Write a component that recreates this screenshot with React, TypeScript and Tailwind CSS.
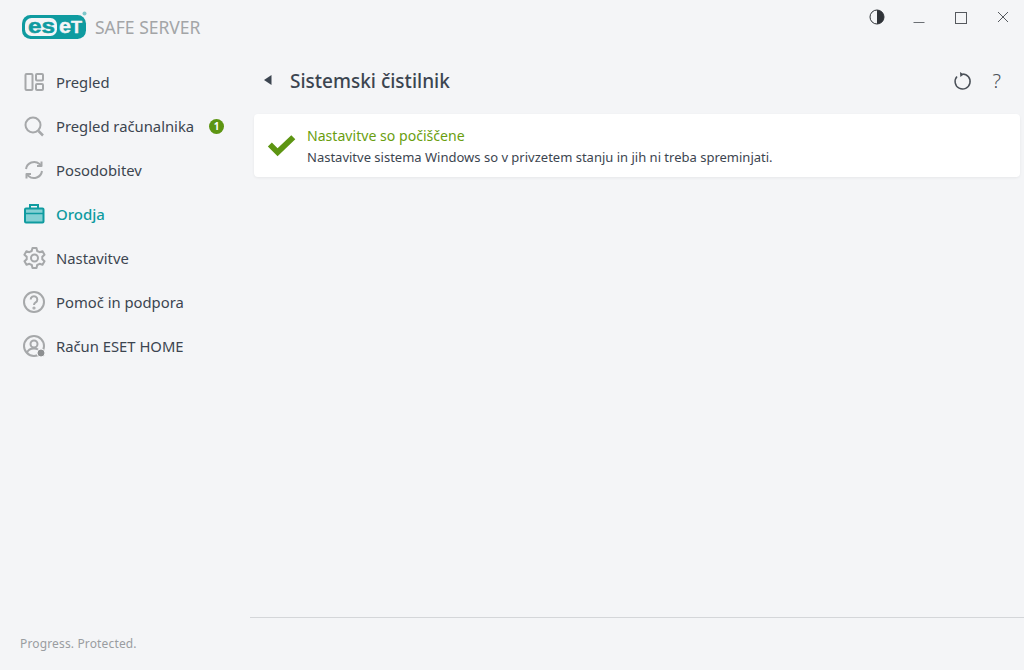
import { ReactNode } from "react";

const grey = "#a6a8aa";

function EsetLogo() {
    return (
        <svg width="66" height="30" viewBox="0 0 66 30" className="block">
            <rect x="0" y="5" width="64" height="24" rx="8.500" fill="#0f9ba0" />
            <rect x="3" y="8" width="32" height="18" rx="6.500" fill="#f4f5f7" />
            <text x="6" y="23" fontFamily="'Liberation Sans', sans-serif" fontWeight="700" fontSize="20" fill="#0f9ba0" stroke="#0f9ba0" strokeWidth="0.500" textLength="27" lengthAdjust="spacingAndGlyphs">es</text>
            <text x="37" y="23" fontFamily="'Liberation Sans', sans-serif" fontWeight="700" fontSize="20" fill="#f4f5f7" stroke="#f4f5f7" strokeWidth="0.400" textLength="12" lengthAdjust="spacingAndGlyphs">e</text>
            <text x="49" y="23" fontFamily="'Liberation Sans', sans-serif" fontWeight="700" fontSize="16" fill="#f4f5f7" stroke="#f4f5f7" strokeWidth="0.400" textLength="11" lengthAdjust="spacingAndGlyphs">T</text>
            <circle cx="62.500" cy="3.500" r="2" fill="#7fc8cb" />
        </svg>
    );
}

function NavIcon({ children }: { children: ReactNode }) {
    return (
        <svg width="24" height="24" viewBox="0 0 24 24" fill="none" stroke={grey} strokeWidth="2" strokeLinejoin="round" className="shrink-0">
            {children}
        </svg>
    );
}

const items: { label: string; icon: ReactNode; active?: boolean; badge?: string }[] = [
    {
        label: "Pregled",
        icon: (
            <NavIcon>
                <rect x="3.500" y="4" width="7" height="16" rx="1" />
                <rect x="14" y="4" width="7" height="6.500" rx="1" />
                <rect x="14" y="14" width="7" height="6" rx="1" />
            </NavIcon>
        ),
    },
    {
        label: "Pregled računalnika",
        badge: "1",
        icon: (
            <NavIcon>
                <circle cx="11" cy="11" r="7.500" />
                <path d="M16.500 17l4.500 4.500" strokeWidth="2.500" />
            </NavIcon>
        ),
    },
    {
        label: "Posodobitev",
        icon: (
            <NavIcon>
                <path d="M4 11a8.200 8.200 0 0 1 13.500-5l2 1.800" />
                <path d="M20 13a8.200 8.200 0 0 1-13.500 5l-2-1.800" />
                <path d="M19.500 3.500v4.500h-4.500" />
                <path d="M4.500 20.500v-4.500h4.500" />
            </NavIcon>
        ),
    },
    {
        label: "Orodja",
        active: true,
        icon: (
            <svg width="24" height="24" viewBox="0 0 24 24" fill="none" stroke="#0f9ba0" strokeWidth="2" className="shrink-0">
                <rect x="3" y="6.500" width="18.500" height="14" rx="1" fill="#84d0d3" />
                <path d="M8 6.500V3h8v3.500" />
                <path d="M3 11.500h18.500" strokeWidth="1.500" />
            </svg>
        ),
    },
    {
        label: "Nastavitve",
        icon: (
            <NavIcon>
                <circle cx="12.500" cy="12" r="3.500" />
                <path d="M10.500 2h4l.7 3 2.400 1.200 2.900-1 2 3.500-2.200 2.100v2.400l2.200 2.100-2 3.500-2.900-1-2.400 1.200-.7 3h-4l-.7-3-2.400-1.200-2.900 1-2-3.500 2.200-2.100v-2.400L2.400 8.700l2-3.500 2.900 1 2.400-1.200z" />
            </NavIcon>
        ),
    },
    {
        label: "Pomoč in podpora",
        icon: (
            <NavIcon>
                <circle cx="12" cy="12" r="10" />
                <path d="M8.700 9.500a3.300 3.300 0 1 1 5 2.800c-1 .7-1.700 1.200-1.700 2.700" />
                <circle cx="12" cy="18" r="0.600" />
            </NavIcon>
        ),
    },
    {
        label: "Račun ESET HOME",
        icon: (
            <svg width="24" height="24" viewBox="0 0 24 24" fill="none" stroke={grey} strokeWidth="2" className="shrink-0">
                <circle cx="12" cy="12" r="10" />
                <circle cx="12" cy="10" r="3.500" />
                <path d="M5 19c1-3.500 4-4.500 7-4.500 1.500 0 3 .3 4 1" />
                <circle cx="19" cy="19" r="4" fill="#8d8f91" stroke="#f4f5f7" strokeWidth="1" />
            </svg>
        ),
    },
];

export default function App() {
    return (
        <div
            className="flex h-[670px] w-[1024px] overflow-hidden bg-[#f4f5f7] text-[#3c4550]"
            style={{ fontFamily: "'Noto Sans', sans-serif" }}
        >
            <aside className="flex w-[250px] shrink-0 flex-col">
                <div className="flex h-[60px] items-start pl-[22px] pt-[10px]">
                    <EsetLogo />
                    <span className="ml-[7px] mt-[5px] text-[17.500px] leading-[24px] text-[#a3a5a7]">SAFE SERVER</span>
                </div>
                <nav className="flex flex-col">
                    {items.map((item) => (
                        <div key={item.label} className="flex h-[44px] items-center pl-[22px]">
                            {item.icon}
                            <span
                                className={
                                    item.active
                                        ? "ml-[10px] text-[15px] font-medium text-[#0f9ba0]"
                                        : "ml-[10px] text-[14.800px]"
                                }
                            >
                                {item.label}
                            </span>
                            {item.badge && (
                                <span className="ml-[15px] flex h-[15px] w-[15px] items-center justify-center rounded-full bg-[#5d9512] text-[10px] font-bold leading-none text-white">
                                    {item.badge}
                                </span>
                            )}
                        </div>
                    ))}
                </nav>
                <div className="mt-auto pb-[17px] pl-[20px] text-[12px] leading-[18px] tracking-[0.150px] text-[#9a9da1]">
                    Progress. Protected.
                </div>
            </aside>

            <main className="flex min-w-0 flex-1 flex-col">
                <div className="flex h-[60px] items-start justify-end">
                    <svg width="16" height="16" viewBox="0 0 16 16" className="mr-[28px] mt-[9px]">
                        <circle cx="8" cy="8" r="7" fill="none" stroke="#2f3338" strokeWidth="1" />
                        <path d="M8 1a7 7 0 0 1 0 14z" fill="#2f3338" />
                    </svg>
                    <svg width="12" height="12" viewBox="0 0 12 12" className="mr-[30px] mt-[11px]">
                        <path d="M0.500 11.500h11" stroke="#6b6f74" strokeWidth="1" />
                    </svg>
                    <svg width="12" height="12" viewBox="0 0 12 12" className="mr-[30px] mt-[12px]">
                        <rect x="0.500" y="0.500" width="11" height="11" fill="none" stroke="#55595e" strokeWidth="1" />
                    </svg>
                    <svg width="12" height="12" viewBox="0 0 12 12" className="mr-[15px] mt-[11px]">
                        <path d="M1 1l10 10M11 1L1 11" stroke="#55595e" strokeWidth="1" />
                    </svg>
                </div>
                <div className="flex h-[42px] items-center pl-[13px] pr-[23px]">
                    <svg width="10" height="12" viewBox="0 0 10 12" className="-mt-[2px] shrink-0">
                        <path d="M8.500 1v10L1 6z" fill="#3c4550" />
                    </svg>
                    <h1 className="ml-[17px] text-[19px] font-medium leading-[28px] text-[#3c4550]">Sistemski čistilnik</h1>
                    <svg width="20" height="20" viewBox="0 0 20 20" fill="none" className="ml-auto">
                        <path d="M9.500 3A7.500 7.500 0 1 1 4 5.500" stroke="#4a5058" strokeWidth="1.500" />
                        <path d="M7 1l3.800 2.500L7.300 6z" fill="#4a5058" />
                    </svg>
                    <span className="ml-[20px] text-[20px] font-light leading-none text-[#4a5058]">?</span>
                </div>
                <div className="mx-[4px] mt-[12px] flex h-[63px] items-center rounded-[4px] bg-white pl-[11px] shadow-[0_1px_3px_rgba(0,0,0,0.06)]">
                    <svg width="32" height="28" viewBox="0 0 28 24" className="shrink-0">
                        <path d="M2.500 12.500l3.500-3.500 5 5L23 2.500l3.500 3.500L11 21z" fill="#5d9512" />
                    </svg>
                    <div className="ml-[10px] mt-[2px] flex flex-col">
                        <span className="text-[14.100px] leading-[21px] text-[#6a9e0f]">Nastavitve so počiščene</span>
                        <span className="text-[13px] leading-[22px] text-[#3c4550]">
                            Nastavitve sistema Windows so v privzetem stanju in jih ni treba spreminjati.
                        </span>
                    </div>
                </div>
                <div className="mb-[52px] mt-auto border-t border-[#d4d6d9]" />
            </main>
        </div>
    );
}
